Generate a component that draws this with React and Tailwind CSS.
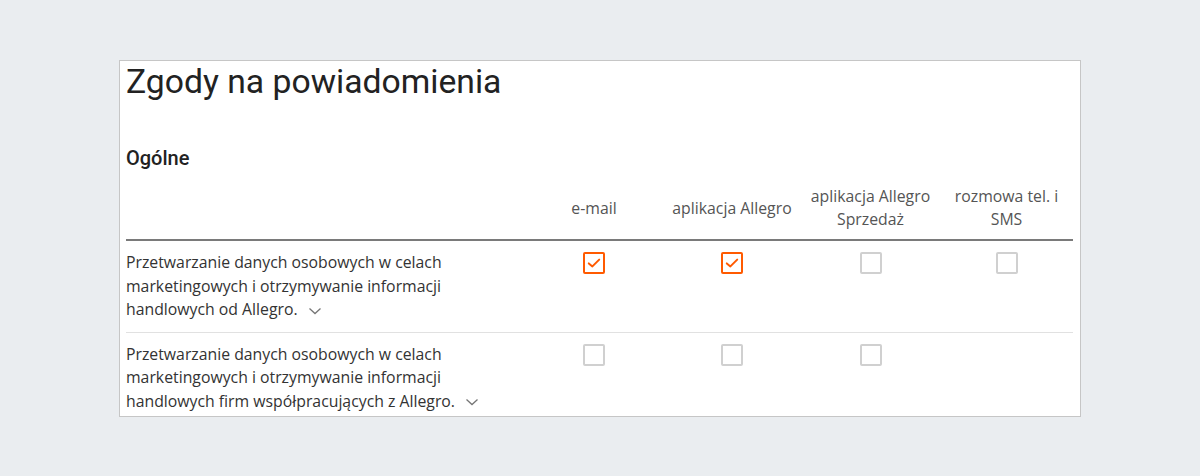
import React from "react";

const columns = [
  "e-mail",
  "aplikacja Allegro",
  "aplikacja Allegro Sprzedaż",
  "rozmowa tel. i SMS",
];

const rows = [
  {
    text: "Przetwarzanie danych osobowych w celach marketingowych i otrzymywanie informacji handlowych od Allegro.",
    values: [true, true, false, false],
  },
  {
    text: "Przetwarzanie danych osobowych w celach marketingowych i otrzymywanie informacji handlowych firm współpracujących z Allegro.",
    values: [false, false, false, null],
  },
];

function Checkbox({ checked }) {
  if (checked) {
    return (
      <span className="flex h-[22px] w-[22px] items-center justify-center rounded-[2px] border-2 border-[#ff5a00] bg-white">
        <svg width="16" height="16" viewBox="0 0 16 16" fill="none">
          <path
            d="M2.8 8.4 L6.4 11.4 L13.2 4.6"
            stroke="#ff5a00"
            strokeWidth="2"
            strokeLinecap="round"
            strokeLinejoin="round"
          />
        </svg>
      </span>
    );
  }
  return (
    <span className="block h-[22px] w-[22px] rounded-[2px] border-2 border-[#d0d0d0] bg-white" />
  );
}

function Chevron() {
  return (
    <svg
      className="ml-[10px] inline-block align-middle"
      width="14"
      height="10"
      viewBox="0 0 14 10"
      fill="none"
    >
      <path d="M1.5 2.5 L7 7.5 L12.5 2.5" stroke="#767676" strokeWidth="1.3" />
    </svg>
  );
}

export default function App() {
  return (
    <div className="min-h-[476px] w-full bg-[#eaedf0] pt-[60px]">
      <div className="mx-auto h-[357px] w-[962px] border border-[#c6c6c6] bg-white px-[6px] pb-[4px]">
        <h1 className="font-['Roboto',sans-serif] text-[33.7px] leading-[42px] font-normal text-[#222]">
          Zgody na powiadomienia
        </h1>
        <h2 className="mt-[42px] font-['Roboto',sans-serif] text-[20px] leading-[26px] font-medium text-[#222]">
          Ogólne
        </h2>

        <div className="mt-[6px] grid w-[947px] grid-cols-[399px_138px_138px_139px_133px] font-['Open_Sans',sans-serif] text-[15.8px] text-[#555]">
          <div className="border-b-2 border-[#7a7a7a]" />
          {columns.map((c) => (
            <div
              key={c}
              className="flex h-[64px] items-center justify-center border-b-2 border-[#7a7a7a] text-center leading-[23px]"
            >
              {c}
            </div>
          ))}

          {rows.map((row, i) => (
            <React.Fragment key={i}>
              <div
                className={`pt-[10px] pb-[10px] pr-4 leading-[23.5px] text-[#333] ${
                  i === 0 ? "border-b border-[#e1e1e1]" : ""
                }`}
              >
                {row.text}
                <Chevron />
              </div>
              {row.values.map((v, j) => (
                <div
                  key={j}
                  className={`flex justify-center pt-[11px] ${
                    i === 0 ? "border-b border-[#e1e1e1]" : ""
                  }`}
                >
                  {v !== null && <Checkbox checked={v} />}
                </div>
              ))}
            </React.Fragment>
          ))}
        </div>
      </div>
    </div>
  );
}
